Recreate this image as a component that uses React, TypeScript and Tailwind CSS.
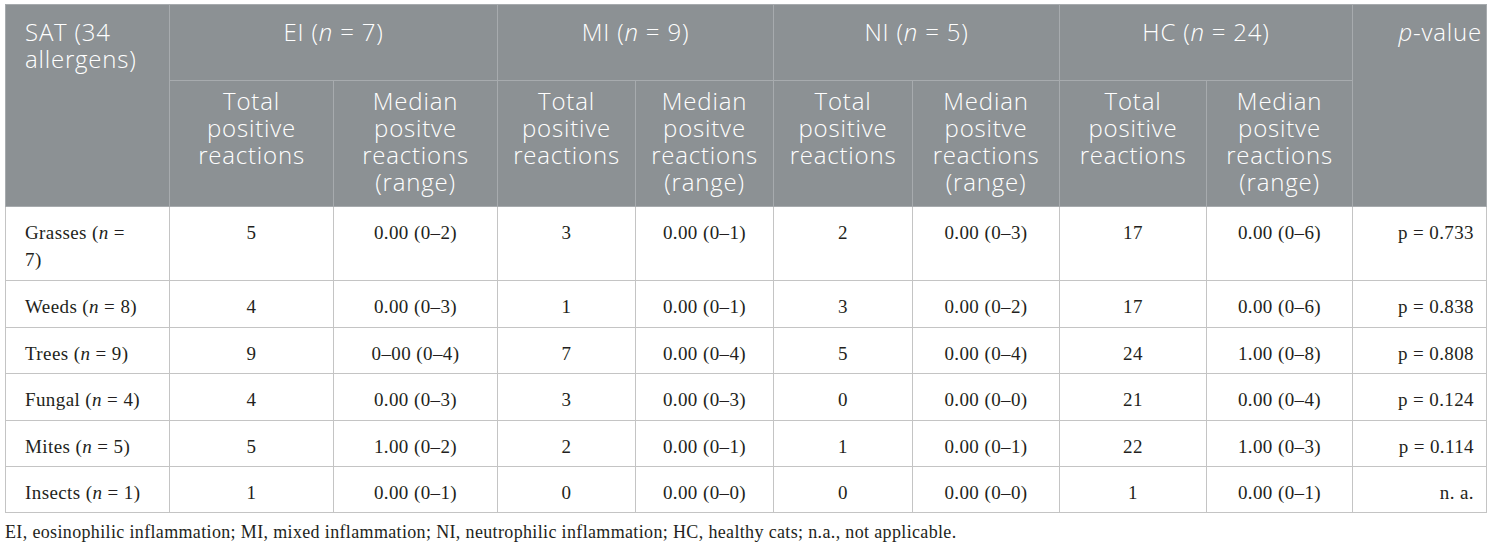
import React from 'react';

interface Row {
  label: React.ReactNode;
  cells: string[];
  p: string;
  h: string;
}

const rows: Row[] = [
  {
    label: (
      <>
        Grasses (<i>n</i> =<br />7)
      </>
    ),
    cells: ['5', '0.00 (0–2)', '3', '0.00 (0–1)', '2', '0.00 (0–3)', '17', '0.00 (0–6)'],
    p: 'p = 0.733',
    h: 'h-[74px]',
  },
  {
    label: (
      <>
        Weeds (<i>n</i> = 8)
      </>
    ),
    cells: ['4', '0.00 (0–3)', '1', '0.00 (0–1)', '3', '0.00 (0–2)', '17', '0.00 (0–6)'],
    p: 'p = 0.838',
    h: 'h-[47px]',
  },
  {
    label: (
      <>
        Trees (<i>n</i> = 9)
      </>
    ),
    cells: ['9', '0–00 (0–4)', '7', '0.00 (0–4)', '5', '0.00 (0–4)', '24', '1.00 (0–8)'],
    p: 'p = 0.808',
    h: 'h-[46px]',
  },
  {
    label: (
      <>
        Fungal (<i>n</i> = 4)
      </>
    ),
    cells: ['4', '0.00 (0–3)', '3', '0.00 (0–3)', '0', '0.00 (0–0)', '21', '0.00 (0–4)'],
    p: 'p = 0.124',
    h: 'h-[47px]',
  },
  {
    label: (
      <>
        Mites (<i>n</i> = 5)
      </>
    ),
    cells: ['5', '1.00 (0–2)', '2', '0.00 (0–1)', '1', '0.00 (0–1)', '22', '1.00 (0–3)'],
    p: 'p = 0.114',
    h: 'h-[46px]',
  },
  {
    label: (
      <>
        Insects (<i>n</i> = 1)
      </>
    ),
    cells: ['1', '0.00 (0–1)', '0', '0.00 (0–0)', '0', '0.00 (0–0)', '1', '0.00 (0–1)'],
    p: 'n. a.',
    h: 'h-[46px]',
  },
];

const groups = [
  { name: 'EI', n: '7' },
  { name: 'MI', n: '9' },
  { name: 'NI', n: '5' },
  { name: 'HC', n: '24' },
];

const widths = ['w-[164px]', 'w-[164px]', 'w-[164px]', 'w-[138px]', 'w-[138px]', 'w-[139px]', 'w-[147px]', 'w-[147px]', 'w-[146px]', 'w-[134px]'];

const th = 'border border-[#a7abae] align-top font-light text-white';
const td = 'border border-[#c4c4c4] align-top pt-[12px] text-center whitespace-nowrap';

export default function App() {
  return (
    <div className="min-h-[550px] w-[1492px] bg-white pl-[5px] pt-[4px]">
      <table className="w-[1481px] table-fixed border-collapse border border-[#c8c8c8]">
        <colgroup>
          {widths.map((w, i) => (
            <col key={i} className={w} />
          ))}
        </colgroup>
        <thead className="bg-[#8c9194] font-['Open_Sans',sans-serif] text-[24px] leading-[27px] tracking-[0.8px]">
          <tr className="h-[76px]">
            <th rowSpan={2} className={`${th} pl-[19px] pr-[10px] pt-[13px] text-left`}>
              SAT (34 allergens)
            </th>
            {groups.map((g) => (
              <th key={g.name} colSpan={2} className={`${th} pt-[13px] text-center`}>
                {g.name} (<i>n</i> = {g.n})
              </th>
            ))}
            <th rowSpan={2} className={`${th} pr-[4px] pt-[13px] text-right whitespace-nowrap`}>
              <i>p</i>-value
            </th>
          </tr>
          <tr className="h-[126px]">
            {groups.map((g) => (
              <React.Fragment key={g.name}>
                <th className={`${th} pt-[6px] text-center`}>
                  Total
                  <br />
                  positive
                  <br />
                  reactions
                </th>
                <th className={`${th} pt-[6px] text-center`}>
                  Median
                  <br />
                  positve
                  <br />
                  reactions
                  <br />
                  (range)
                </th>
              </React.Fragment>
            ))}
          </tr>
        </thead>
        <tbody className="font-['Liberation_Serif',serif] text-[19px] leading-[27px] tracking-[0.4px] text-[#231f20]">
          {rows.map((r, i) => (
            <tr key={i} className={r.h}>
              <td className={`${td} pl-[19px] text-left`}>{r.label}</td>
              {r.cells.map((c, j) => (
                <td key={j} className={td}>
                  {c}
                </td>
              ))}
              <td className={`${td} pr-[12px] text-right`}>{r.p}</td>
            </tr>
          ))}
        </tbody>
      </table>
      <p className="mt-[7px] font-['Liberation_Serif',serif] text-[18px] leading-[24px] tracking-[0.35px] text-[#231f20]">
        EI, eosinophilic inflammation; MI, mixed inflammation; NI, neutrophilic inflammation; HC, healthy cats; n.a., not applicable.
      </p>
    </div>
  );
}
